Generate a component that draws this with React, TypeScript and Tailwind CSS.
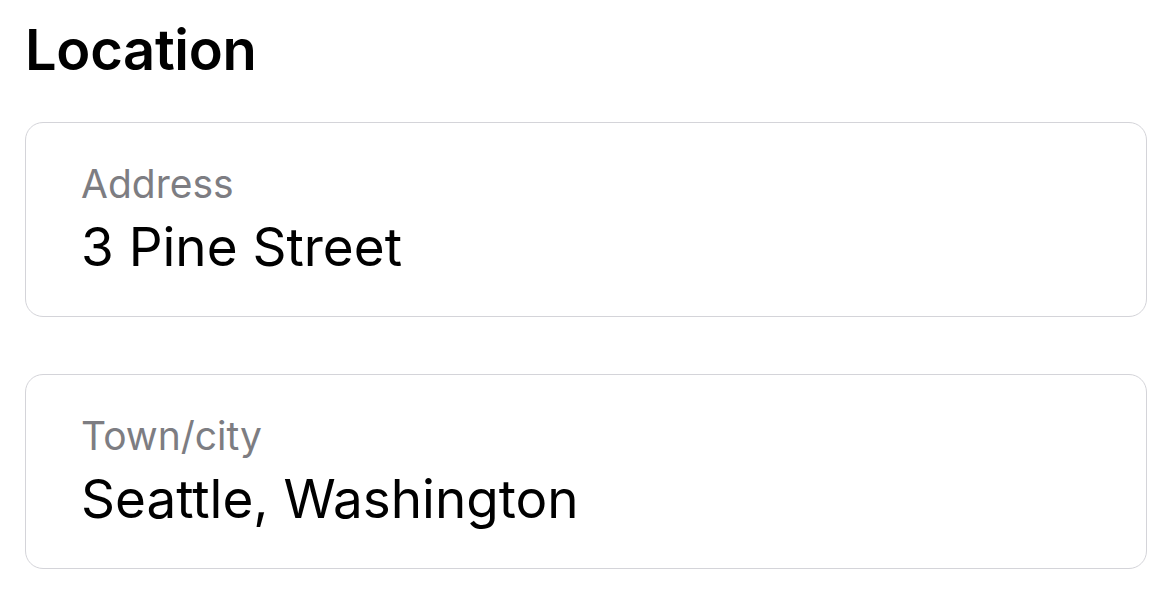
export default function App() {
  const fields = [
    { label: "Address", value: "3 Pine Street" },
    { label: "Town/city", value: "Seattle, Washington" },
  ];
  return (
    <div
      className="w-[1162px] h-[600px] bg-white pl-[25px] pr-[15px] pt-[22px] overflow-hidden"
      style={{ fontFamily: "Inter, 'Noto Sans', sans-serif" }}
    >
      <h1 className="text-[56px] leading-none font-semibold text-black tracking-[-0.3px]">Location</h1>
      <div className="mt-[44px] flex flex-col gap-[57px]">
        {fields.map((f) => (
          <div
            key={f.label}
            className="h-[195px] rounded-[18px] border-[1.5px] border-[#d4d4d9] bg-white pl-[55px] pt-[41px]"
          >
            <div className="text-[39px] leading-none text-[#7d7d82]">{f.label}</div>
            <div className="mt-[18px] text-[53px] leading-none text-black">{f.value}</div>
          </div>
        ))}
      </div>
    </div>
  );
}
